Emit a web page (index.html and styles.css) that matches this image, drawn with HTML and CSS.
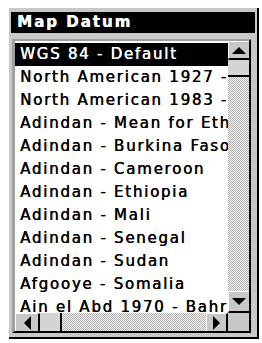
FILE: index.html
```html
<!DOCTYPE html>
<html>
<head>
<meta charset="utf-8">
<link rel="stylesheet" href="styles.css">
</head>
<body>
<div class="window">
  <div class="title">Map Datum</div>
  <div class="listbox">
    <div class="list">
      <div class="row selected">WGS 84 - Default</div>
      <div class="row">North American 1927 - Mean</div>
      <div class="row">North American 1983 - Alaska</div>
      <div class="row">Adindan - Mean for Ethiopia</div>
      <div class="row">Adindan - Burkina Faso</div>
      <div class="row">Adindan - Cameroon</div>
      <div class="row">Adindan - Ethiopia</div>
      <div class="row">Adindan - Mali</div>
      <div class="row">Adindan - Senegal</div>
      <div class="row">Adindan - Sudan</div>
      <div class="row">Afgooye - Somalia</div>
      <div class="row">Ain el Abd 1970 - Bahrain</div>
    </div>
    <div class="vscroll">
      <div class="btn up"><span class="tri tri-up"></span></div>
      <div class="vthumb"></div>
      <div class="track"></div>
      <div class="btn down"><span class="tri tri-down"></span></div>
    </div>
    <div class="hscroll">
      <div class="btn left"><span class="tri tri-left"></span></div>
      <div class="hthumb"></div>
      <div class="track"></div>
      <div class="btn right"><span class="tri tri-right"></span></div>
    </div>
    <div class="corner"></div>
  </div>
</div>
</body>
</html>
```
FILE: styles.css
```css
html, body {
  margin: 0;
  padding: 0;
  background: #ffffff;
}
body {
  font-family: "DejaVu Sans", sans-serif;
  font-size: 15px;
  letter-spacing: 1.75px;
  color: #000;
}
.window {
  margin: 8px 0 0 9px;
  width: 250px;
  height: 331px;
  box-sizing: border-box;
  background: #c8c8c8;
  border-right: 2px solid #000;
  border-bottom: 2px solid #000;
  padding: 4px 0 0 2px;
}
.title {
  width: 244px;
  height: 21px;
  background: #000;
  color: #fff;
  font-weight: bold;
  letter-spacing: 2px;
  line-height: 21px;
  padding-left: 6px;
  box-sizing: border-box;
  white-space: nowrap;
  overflow: hidden;
  text-shadow: 0.5px 0 0 #fff;
}
.listbox {
  margin: 6px 0 0 1px;
  width: 239px;
  box-sizing: border-box;
  border-top: 2px solid #a0a0a0;
  border-left: 3px solid #a0a0a0;
  border-right: 2px solid #000;
  border-bottom: 2px solid #000;
  display: grid;
  grid-template-columns: 213px 21px;
  grid-template-rows: 272px 18px;
}
.list {
  background: #fff;
  overflow: hidden;
  border-top: 2px solid #fff;
}
.row {
  height: 23px;
  line-height: 23px;
  padding-left: 5px;
  white-space: nowrap;
  text-shadow: 0.5px 0 0 #000;
}
.row.selected {
  background: #000;
  color: #fff;
  text-shadow: 0.5px 0 0 #fff;
}
.vscroll {
  display: flex;
  flex-direction: column;
  background: #c8c8c8;
}
.hscroll {
  display: flex;
  flex-direction: row;
}
.btn {
  background: #c8c8c8;
  box-sizing: border-box;
  border-top: 1px solid #fff;
  border-left: 1px solid #fff;
  display: flex;
  align-items: center;
  justify-content: center;
}
.vscroll .btn {
  height: 19px;
  border-bottom: 2px solid #000;
}
.vscroll .btn.down {
  height: 22px;
}
.hscroll .btn {
  width: 25px;
  border-right: 2px solid #000;
}
.hscroll .btn.right {
  width: 22px;
}
.vthumb {
  height: 17px;
  background: #d4d4d4;
  box-sizing: border-box;
  border-bottom: 2px solid #000;
}
.hthumb {
  width: 22px;
  background: #d4d4d4;
  box-sizing: border-box;
  border-right: 2px solid #000;
}
.track {
  flex: 1;
  background: repeating-conic-gradient(#b4b4b4 0 25%, #f2f2f2 0 50%) 0 0 / 2px 2px;
}
.corner {
  background: #c8c8c8;
}
.tri {
  width: 0;
  height: 0;
  border-style: solid;
  border-color: transparent;
}
.tri-up {
  border-width: 0 7px 7px 7px;
  border-bottom-color: #000;
}
.tri-down {
  border-width: 7px 7px 0 7px;
  border-top-color: #000;
}
.tri-left {
  border-width: 7px 7px 7px 0;
  border-right-color: #000;
}
.tri-right {
  border-width: 7px 0 7px 7px;
  border-left-color: #000;
}
```
